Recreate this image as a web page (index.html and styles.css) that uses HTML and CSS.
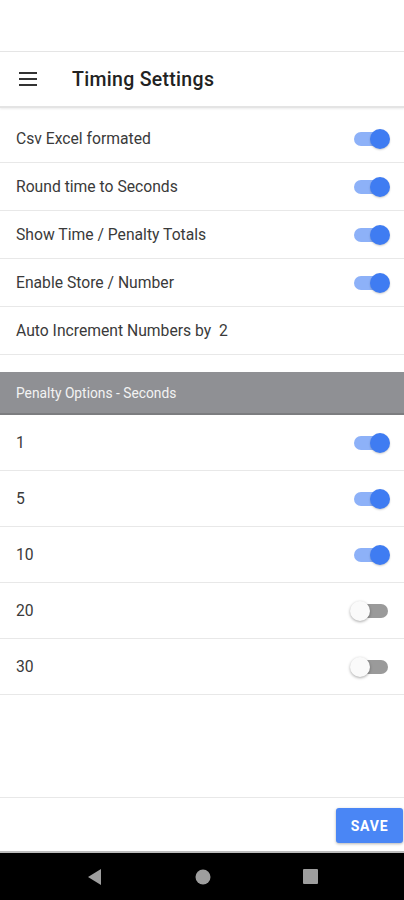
FILE: index.html
```html
<!DOCTYPE html>
<html>
<head>
<meta charset="utf-8">
<link rel="stylesheet" href="styles.css">
</head>
<body>
<div class="screen">
  <div class="status"></div>
  <header class="appbar">
    <svg class="menu" width="18" height="14" viewBox="0 0 18 14"><rect x="0" y="0" width="18" height="2" fill="#333"/><rect x="0" y="6" width="18" height="2" fill="#333"/><rect x="0" y="12" width="18" height="2" fill="#333"/></svg>
    <span class="title">Timing Settings</span>
  </header>
  <div class="list">
    <div class="row"><span>Csv Excel formated</span><span class="toggle on"></span></div>
    <div class="row"><span>Round time to Seconds</span><span class="toggle on"></span></div>
    <div class="row"><span>Show Time / Penalty Totals</span><span class="toggle on"></span></div>
    <div class="row"><span>Enable Store / Number</span><span class="toggle on"></span></div>
    <div class="row"><span>Auto Increment Numbers by&nbsp; 2</span></div>
  </div>
  <div class="section">Penalty Options - Seconds</div>
  <div class="plist">
    <div class="prow"><span>1</span><span class="toggle on"></span></div>
    <div class="prow"><span>5</span><span class="toggle on"></span></div>
    <div class="prow"><span>10</span><span class="toggle on"></span></div>
    <div class="prow"><span>20</span><span class="toggle"></span></div>
    <div class="prow"><span>30</span><span class="toggle"></span></div>
  </div>
  <div class="spacer"></div>
  <div class="footer"><button class="save">SAVE</button></div>
  <nav class="navbar">
    <svg width="16" height="18" viewBox="0 0 16 18"><polygon points="14,1 14,17 1,9" fill="#9e9e9e"/></svg>
    <svg width="16" height="16" viewBox="0 0 16 16"><circle cx="8" cy="8" r="7.5" fill="#9e9e9e"/></svg>
    <svg width="15" height="15" viewBox="0 0 15 15"><rect x="0" y="0" width="15" height="15" rx="1" fill="#9e9e9e"/></svg>
  </nav>
</div>
</body>
</html>
```
FILE: styles.css
```css
* { box-sizing: border-box; }
html, body { margin: 0; padding: 0; }
body { font-family: Roboto, "Noto Sans", sans-serif; background: #fff; color: #333; }
.screen { width: 404px; height: 900px; display: flex; flex-direction: column; }
.status { height: 52px; border-bottom: 1px solid #e6e6e6; flex: none; }
.appbar { height: 56px; flex: none; display: flex; align-items: center; padding-left: 19px; border-bottom: 2px solid #e4e4e4; box-shadow: 0 1px 2px rgba(0,0,0,0.08); }
.menu { margin-right: 35px; }
.title { font-size: 19.5px; font-weight: 500; color: #222; letter-spacing: 0.3px; }
.list { margin-top: 7px; flex: none; }
.row { height: 48px; display: flex; align-items: center; justify-content: space-between; padding: 0 16px; border-bottom: 1px solid #e8e8e8; font-size: 15.7px; color: #3a3a3a; }
.section { margin-top: 17px; height: 43px; flex: none; background: #8f9094; border-bottom: 2px solid #7c7d80; color: #f3f3f3; font-size: 13.8px; display: flex; align-items: center; padding-left: 16px; }
.plist { flex: none; }
.prow { height: 56px; display: flex; align-items: center; justify-content: space-between; padding: 0 16px; border-bottom: 1px solid #e8e8e8; font-size: 15.7px; color: #3a3a3a; }
.toggle { position: relative; width: 34px; height: 14px; border-radius: 7px; background: #9a9a9a; margin-right: 0; }
.toggle::after { content: ""; position: absolute; top: -3px; left: -4px; width: 20px; height: 20px; border-radius: 50%; background: #fafafa; box-shadow: 0 1px 3px rgba(0,0,0,0.35); }
.toggle.on { background: #8db1f8; }
.toggle.on::after { left: auto; right: -2px; background: #3f7cf2; box-shadow: 0 1px 2px rgba(0,0,0,0.2); }
.spacer { flex: 1; border-bottom: 1px solid #e8e8e8; }
.footer { height: 55px; flex: none; display: flex; align-items: flex-start; justify-content: flex-end; padding-top: 10px; border-bottom: 2px solid #bdbdbd; }
.save { width: 67px; height: 35px; margin-right: 1px; border: none; border-radius: 3px; background: #4a86f5; color: #fff; font-family: Roboto, sans-serif; font-weight: 700; font-size: 14px; letter-spacing: 0.8px; box-shadow: 0 1px 3px rgba(0,0,0,0.3); }
.navbar { height: 47px; flex: none; background: #000; display: flex; align-items: center; justify-content: center; gap: 92px; }
```
